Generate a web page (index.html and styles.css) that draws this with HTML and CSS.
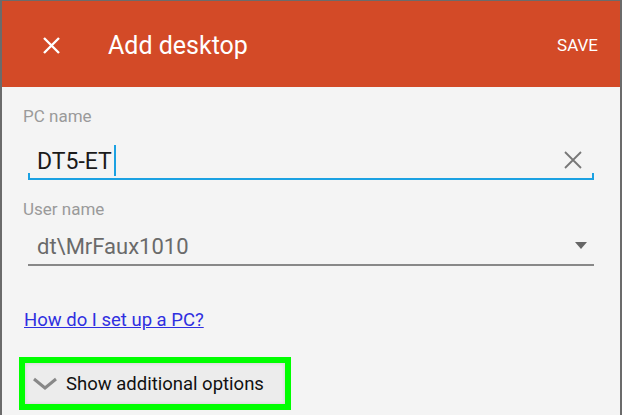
FILE: index.html
```html
<!DOCTYPE html>
<html>
<head>
<meta charset="utf-8">
<link rel="stylesheet" href="styles.css">
</head>
<body>
<div class="frame">
  <header class="appbar">
    <svg class="close" width="17" height="17" viewBox="0 0 17 17"><path d="M1 1L16 16M16 1L1 16" stroke="#fff" stroke-width="2.4" fill="none"/></svg>
    <h1 class="title">Add desktop</h1>
    <span class="save">SAVE</span>
  </header>
  <main class="content">
    <div class="field">
      <label class="label">PC name</label>
      <div class="input focused">
        <span class="value dark">DT5-ET</span><span class="caret"></span>
        <svg class="clear" width="18" height="18" viewBox="0 0 18 18"><path d="M1 1L17 17M17 1L1 17" stroke="#777" stroke-width="1.8" fill="none"/></svg>
      </div>
    </div>
    <div class="field user">
      <label class="label">User name</label>
      <div class="input select">
        <span class="value muted">dt\MrFaux1010</span>
        <svg class="drop" width="12" height="7" viewBox="0 0 12 7"><path d="M0 0H12L6 7Z" fill="#666"/></svg>
      </div>
    </div>
    <a class="help" href="#">How do I set up a PC?</a>
    <div class="highlight">
      <div class="more">
        <svg class="chev" width="26" height="13" viewBox="0 0 26 13"><path d="M2 2L13 11L24 2" stroke="#888" stroke-width="3" fill="none"/></svg>
        <span class="more-text">Show additional options</span>
      </div>
    </div>
  </main>
</div>
</body>
</html>
```

FILE: styles.css
```css
html, body {
  margin: 0;
  padding: 0;
  background: #f4f4f4;
}
.frame {
  height: 414px;
  border-top: 1px solid #6b6b6b;
  border-left: 2px solid #6b6b6b;
  border-right: 2px solid #6b6b6b;
  background: #f4f4f4;
  font-family: Roboto, "Noto Sans", sans-serif;
  overflow: hidden;
}
.appbar {
  height: 86px;
  box-sizing: border-box;
  background: #d34a27;
  display: flex;
  align-items: center;
  padding: 2px 22px 0 41px;
  color: #fff;
}
.close {
  flex: none;
}
.title {
  margin: 0 0 0 48px;
  font-size: 25px;
  font-weight: 400;
  flex: 1;
}
.save {
  font-size: 17px;
}
.content {
  padding: 19px 26px 0 21px;
}
.label {
  display: block;
  font-size: 17px;
  color: #9a9a9a;
  line-height: 20px;
}
.input {
  margin-left: 5px;
  display: flex;
  align-items: flex-end;
  position: relative;
  padding-left: 9px;
  padding-right: 12px;
}
.input.focused {
  margin-top: 2px;
  height: 50px;
  padding-bottom: 2px;
  box-sizing: border-box;
  height: 52px;
  border-bottom: 2px solid #1ba1e2;
}
.input.focused::before,
.input.focused::after {
  content: "";
  position: absolute;
  bottom: 0;
  width: 2px;
  height: 5px;
  background: #1ba1e2;
}
.input.focused::before { left: 0; }
.input.focused::after { right: 0; }
.value {
  line-height: 28px;
}
.dark {
  color: #1a1a1a;
  font-size: 23px;
}
.muted {
  color: #6a6a6a;
  font-size: 22px;
}
.caret {
  width: 2px;
  height: 31px;
  background: #1ba1e2;
  margin-left: 2px;
}
.clear {
  margin-left: auto;
  margin-bottom: 7px;
}
.field.user {
  margin-top: 19px;
}
.input.select {
  box-sizing: border-box;
  height: 47px;
  padding-bottom: 3px;
  border-bottom: 2px solid #888;
}
.drop {
  margin-left: auto;
  margin-right: -5px;
  margin-bottom: 12px;
}
.help {
  display: block;
  width: max-content;
  margin-top: 43px;
  margin-left: 1px;
  font-size: 18.5px;
  line-height: 22px;
  color: #2f2fe0;
  text-decoration: underline;
}
.highlight {
  margin-top: 26px;
  margin-left: -4px;
  width: 260px;
  border: 6px solid #00ff00;
  background: #ececec;
}
.more {
  display: flex;
  align-items: center;
  height: 41px;
  padding-left: 7px;
  box-shadow: inset 0 0 4px rgba(0,0,0,0.12);
}
.chev {
  flex: none;
}
.more-text {
  margin-left: 8px;
  font-size: 18.5px;
  color: #111;
}
```
